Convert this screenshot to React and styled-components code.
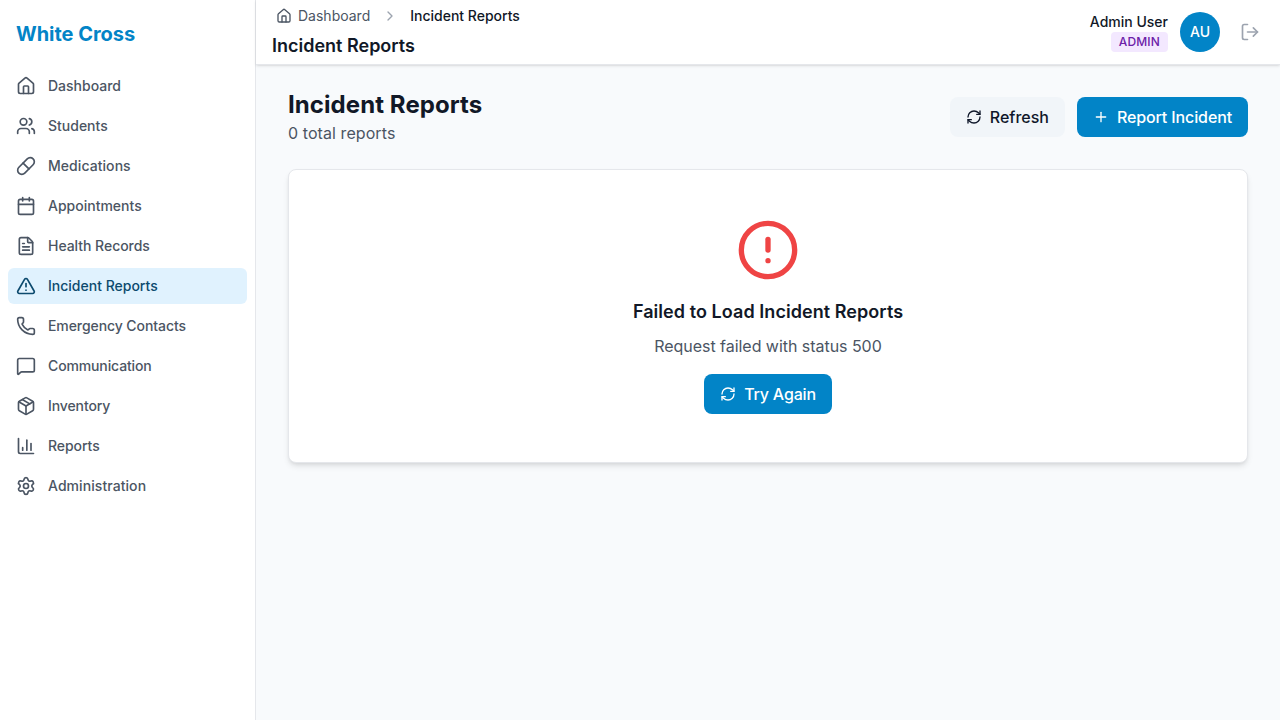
import React from 'react';
import styled, { createGlobalStyle, css } from 'styled-components';
import {
  House, Users, Pill, Calendar, FileText, TriangleAlert, Phone, MessageSquare,
  Package, ChartColumn, Settings, ChevronRight, LogOut, RefreshCw, Plus, CircleAlert,
} from 'lucide-react';

const GlobalStyle = createGlobalStyle`
  *, *::before, *::after { box-sizing: border-box; }
  body {
    margin: 0;
    font-family: Inter, 'Liberation Sans', sans-serif;
    font-size: 16px;
    line-height: 24px;
    color: #0f172a;
    background: #f8fafc;
  }
  h1, h2, h3, p { margin: 0; }
  svg { display: block; flex-shrink: 0; }
`;

const Layout = styled.div`
  display: flex;
  height: 100vh;
  overflow: hidden;
`;

const Sidebar = styled.aside`
  display: flex;
  flex-direction: column;
  flex: 0 0 256px;
  padding-top: 20px;
  background: #fff;
  border-right: 1px solid #e5e7eb;
`;

const Brand = styled.div`
  padding: 0 16px;
  font-size: 20px;
  line-height: 28px;
  font-weight: 700;
  letter-spacing: -0.04px;
  color: #0284c7;
`;

const Nav = styled.nav`
  display: flex;
  flex-direction: column;
  gap: 4px;
  margin-top: 20px;
  padding: 0 8px;
`;

const NavItem = styled.a`
  display: flex;
  align-items: center;
  gap: 12px;
  height: 36px;
  padding: 0 8px;
  border-radius: 6px;
  font-size: 14px;
  line-height: 20px;
  font-weight: 500;
  letter-spacing: ${(p) => p.$tracking || 0}px;
  color: ${(p) => (p.$active ? '#0c4a6e' : '#4b5563')};
  background: ${(p) => (p.$active ? '#e0f2fe' : 'transparent')};
`;

const Column = styled.div`
  display: flex;
  flex-direction: column;
  flex: 1;
  min-width: 0;
`;

const Header = styled.header`
  position: relative;
  z-index: 10;
  display: flex;
  align-items: center;
  justify-content: space-between;
  flex: 0 0 65px;
  padding: 0 12px 0 16px;
  background: #fff;
  border-bottom: 1px solid #e5e7eb;
  box-shadow: 0 1px 3px 0 rgba(0, 0, 0, 0.1), 0 1px 2px -1px rgba(0, 0, 0, 0.1);
`;

const HeaderTitles = styled.div`
  display: flex;
  flex-direction: column;
  gap: 4px;
`;

const Breadcrumbs = styled.nav`
  display: flex;
  align-items: center;
  gap: 8px;
  height: 24px;
  font-size: 14px;
  line-height: 20px;
  color: #9ca3af;
`;

const Crumb = styled.span`
  display: flex;
  align-items: center;
  gap: 6px;
  padding: 0 4px;
  color: #4b5563;
  ${(p) => p.$current && css`
    font-weight: 500;
    color: #111827;
  `}
`;

const HeaderTitle = styled.h1`
  font-size: 18px;
  line-height: 28px;
  font-weight: 600;
  color: #111827;
`;

const Account = styled.div`
  display: flex;
  align-items: center;
  gap: 12px;
`;

const AccountInfo = styled.div`
  display: flex;
  flex-direction: column;
  align-items: flex-end;
  font-size: 14px;
  line-height: 20px;
  font-weight: 500;
  color: #111827;
`;

const RoleBadge = styled.span`
  padding: 2px 8px;
  border-radius: 4px;
  font-size: 12px;
  line-height: 16px;
  letter-spacing: 0.15px;
  color: #6b21a8;
  background: #f3e8ff;
`;

const Avatar = styled.div`
  display: flex;
  align-items: center;
  justify-content: center;
  width: 40px;
  height: 40px;
  border-radius: 50%;
  font-size: 14px;
  line-height: 20px;
  font-weight: 500;
  color: #fff;
  background: #0284c7;
`;

const IconButton = styled.button`
  padding: 8px;
  border: 0;
  background: none;
  color: #9ca3af;
`;

const Main = styled.main`
  display: flex;
  flex-direction: column;
  gap: 24px;
  padding: 24px 32px;
`;

const PageHeader = styled.div`
  display: flex;
  align-items: center;
  justify-content: space-between;
`;

const PageTitle = styled.h2`
  font-size: 24px;
  line-height: 32px;
  font-weight: 700;
  letter-spacing: 0.08px;
  color: #111827;
`;

const Muted = styled.p`
  letter-spacing: 0.08px;
  color: #4b5563;
`;

const Actions = styled.div`
  display: flex;
  gap: 12px;
`;

const Button = styled.button`
  display: inline-flex;
  align-items: center;
  gap: 8px;
  height: 40px;
  padding: 0 16px;
  border: 0;
  border-radius: 8px;
  font: 500 16px/24px Inter, 'Liberation Sans', sans-serif;
  letter-spacing: ${(p) => p.$tracking || 0}px;
  color: ${(p) => (p.$secondary ? '#0f172a' : '#fff')};
  background: ${(p) => (p.$secondary ? '#f1f5f9' : '#0284c7')};
`;

const ErrorCard = styled.section`
  display: flex;
  flex-direction: column;
  align-items: center;
  padding: 48px;
  border: 1px solid #e5e7eb;
  border-radius: 8px;
  background: #fff;
  box-shadow: 0 4px 6px -1px rgba(0, 0, 0, 0.1), 0 2px 4px -2px rgba(0, 0, 0, 0.1);
`;

const ErrorTitle = styled.h3`
  margin: 16px 0 8px;
  font-size: 18px;
  line-height: 28px;
  font-weight: 600;
  letter-spacing: 0.06px;
  color: #111827;
`;

const ErrorMessage = styled(Muted)`
  margin-bottom: 16px;
  letter-spacing: -0.04px;
`;

const navItems = [
  { label: 'Dashboard', icon: House },
  { label: 'Students', icon: Users },
  { label: 'Medications', icon: Pill, tracking: 0.06 },
  { label: 'Appointments', icon: Calendar },
  { label: 'Health Records', icon: FileText, tracking: -0.04 },
  { label: 'Incident Reports', icon: TriangleAlert, active: true },
  { label: 'Emergency Contacts', icon: Phone, tracking: -0.08 },
  { label: 'Communication', icon: MessageSquare, tracking: -0.13 },
  { label: 'Inventory', icon: Package, tracking: -0.1 },
  { label: 'Reports', icon: ChartColumn, tracking: -0.05 },
  { label: 'Administration', icon: Settings, tracking: 0.07 },
];

export default function App() {
  return (
    <>
      <GlobalStyle />
      <Layout>
        <Sidebar>
          <Brand>White Cross</Brand>
          <Nav>
            {navItems.map(({ label, icon: Icon, active, tracking }) => (
              <NavItem key={label} $active={active} $tracking={tracking}>
                <Icon size={20} />
                {label}
              </NavItem>
            ))}
          </Nav>
        </Sidebar>
        <Column>
          <Header>
            <HeaderTitles>
              <Breadcrumbs>
                <Crumb><House size={16} />Dashboard</Crumb>
                <ChevronRight size={16} />
                <Crumb $current>Incident Reports</Crumb>
              </Breadcrumbs>
              <HeaderTitle>Incident Reports</HeaderTitle>
            </HeaderTitles>
            <Account>
              <AccountInfo>
                <span>Admin User</span>
                <RoleBadge>ADMIN</RoleBadge>
              </AccountInfo>
              <Avatar>AU</Avatar>
              <IconButton aria-label="Log out"><LogOut size={20} /></IconButton>
            </Account>
          </Header>
          <Main>
            <PageHeader>
              <div>
                <PageTitle>Incident Reports</PageTitle>
                <Muted>0 total reports</Muted>
              </div>
              <Actions>
                <Button $secondary><RefreshCw size={16} />Refresh</Button>
                <Button $tracking={-0.12}><Plus size={16} />Report Incident</Button>
              </Actions>
            </PageHeader>
            <ErrorCard>
              <CircleAlert size={64} color="#ef4444" />
              <ErrorTitle>Failed to Load Incident Reports</ErrorTitle>
              <ErrorMessage>Request failed with status 500</ErrorMessage>
              <Button $tracking={-0.18}><RefreshCw size={16} />Try Again</Button>
            </ErrorCard>
          </Main>
        </Column>
      </Layout>
    </>
  );
}
